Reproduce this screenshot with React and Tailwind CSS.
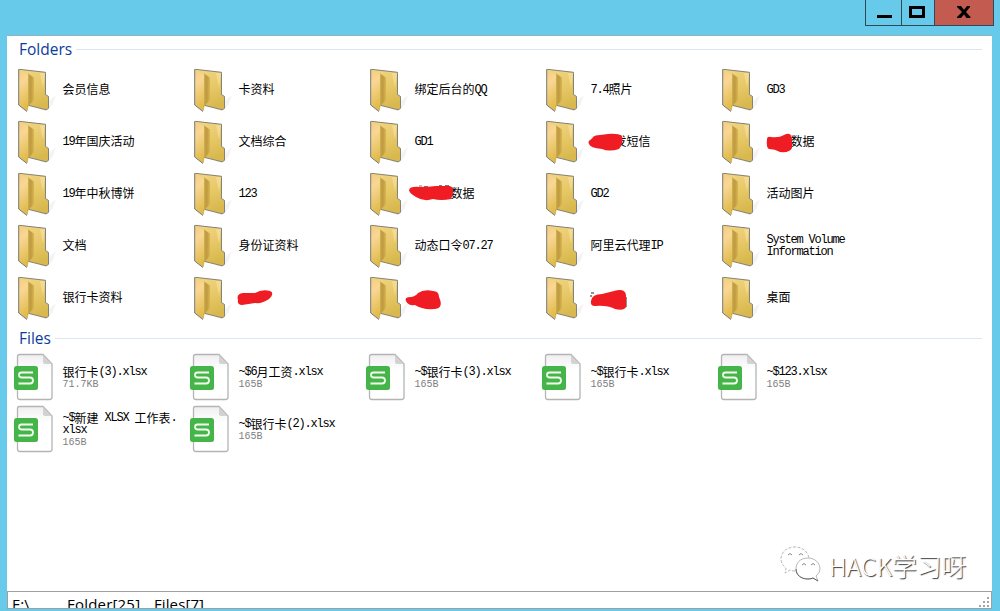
const FOLDERS = [
  { name: "会员信息" }, { name: "卡资料" }, { name: "绑定后台的QQ" }, { name: "7.4照片" }, { name: "GD3" },
  { name: "19年国庆活动" }, { name: "文档综合" }, { name: "GD1" }, { name: "发短信", mark: "a" }, { name: "数据", mark: "b" },
  { name: "19年中秋博饼" }, { name: "123" }, { name: "数据", mark: "c" }, { name: "GD2" }, { name: "活动图片" },
  { name: "文档" }, { name: "身份证资料" }, { name: "动态口令07.27" }, { name: "阿里云代理IP" }, { name: "System Volume\nInformation" },
  { name: "银行卡资料" }, { name: "", mark: "d" }, { name: "", mark: "e" }, { name: "", mark: "f" }, { name: "桌面" },
];

const FILES = [
  ["银行卡(3).xlsx", "71.7KB"],
  ["~$6月工资.xlsx", "165B"],
  ["~$银行卡(3).xlsx", "165B"],
  ["~$银行卡.xlsx", "165B"],
  ["~$123.xlsx", "165B"],
  ["~$新建 XLSX 工作表.\nxlsx", "165B"],
  ["~$银行卡(2).xlsx", "165B"],
];

// Hand-drawn strokes, in coordinates of a 176x52 cell.
const MARKS = {
  a: { pad: "pl-6", d: "M47 29C45 25 50 25 51 22Q53 20 58 20L66 19Q76 18 80 21Q82 28 77 34Q67 37 60 34Q48 33 47 29Z" },
  b: { pad: "pl-6", d: "M49 24Q49 21 53 22Q61 23 66 20Q73 16 74 24L74 33Q72 38 62 37Q57 34 51 34Q48 33 49 24Z" },
  c: { pad: "pl-9", d: "M43 23Q44 19 54 20Q62 20 70 19L84 19Q90 21 85 32Q75 34 67 32Q58 35 50 30Q43 26 43 23Z" },
  d: { pad: "pl-0", d: "M48 29Q46 23 53 22L65 22Q72 18 80 20Q85 22 79 28Q72 33 65 32L52 34Q47 34 48 29Z" },
  e: { pad: "pl-0", d: "M40 30Q38 26 45 26Q50 25 52 22Q58 18 67 20Q73 20 73 26Q78 37 69 38Q56 39 49 34Q42 35 40 30Z" },
  f: { pad: "pl-0", d: "M49 30Q50 23 60 23L72 20Q83 17 84 24L84 36Q82 40 73 38Q65 34 53 35Q48 35 49 30Z" },
};

function Label({ text }) {
  return text.split("\n").map((line) => (
    <div key={line} className="flex h-3 items-center whitespace-pre leading-3">
      {line.split(/([\x20-\x7e]+)/).filter(Boolean).map((part, i) =>
        /^[\x20-\x7e]+$/.test(part)
          ? <span key={i} className="pt-px font-['Liberation_Mono',monospace] text-[12px] leading-3 tracking-[-1.2px]">{part}</span>
          : <span key={i} className="leading-3">{part}</span>
      )}
    </div>
  ));
}

function FolderIcon() {
  return (
    <svg width="48" height="52" viewBox="0 0 48 52" className="shrink-0">
      <defs>
        <linearGradient id="back" x1="0" y1="0" x2="0.3" y2="1">
          <stop offset="0" stopColor="#f3d688" />
          <stop offset=".5" stopColor="#e8ca6b" />
          <stop offset="1" stopColor="#d9b94f" />
        </linearGradient>
        <linearGradient id="front" x1="0" y1="0" x2="0.2" y2="1">
          <stop offset="0" stopColor="#f3cb7c" />
          <stop offset=".35" stopColor="#f9d794" />
          <stop offset="1" stopColor="#dfbb4c" />
        </linearGradient>
        <linearGradient id="shade" x1="0" x2="1">
          <stop offset="0" stopColor="#c5a344" />
          <stop offset=".5" stopColor="#bf9d40" />
          <stop offset="1" stopColor="#d8b753" />
        </linearGradient>
      </defs>
      <path d="M30 46L40 36L46 31L43 40L37 47Z" fill="#f0f0f0" opacity=".7" />
      <path d="M9 5.3L35.5 8.3V30.5L38.5 32.5V44.300L36 45.8L17 41Z" fill="url(#back)" stroke="#858175" />
      <path d="M18 9.5L24 13.5V36L18.5 42Z" fill="url(#shade)" />
      <path d="M30 9L35 9L33 24Z" fill="#f8e3a8" opacity=".6" />
      <path d="M8.7 5.3L18.5 10.800V40L17 47.500L8.7 41Z" fill="url(#front)" />
      <path d="M17 47.500L8.7 41V5.3" fill="none" stroke="#77787a" />
      <path d="M18.5 11V40L17 47" fill="none" stroke="#c7a44d" strokeWidth=".7" />
    </svg>
  );
}

function SheetIcon() {
  return (
    <svg width="48" height="52" viewBox="0 0 48 52" className="shrink-0">
      <defs>
        <linearGradient id="paper" x1="0" y1="0" x2="0" y2="1">
          <stop offset="0" stopColor="#efefef" />
          <stop offset=".35" stopColor="#ffffff" />
        </linearGradient>
      </defs>
      <path d="M9.5 2.5H33L42 12V45Q42 47.5 39.5 47.5H10Q7.5 47.5 7.5 45V4.5Q7.5 2.5 9.5 2.5Z" fill="url(#paper)" stroke="#b4b4b4" strokeWidth="1.3" />
      <path d="M33 3V10Q33 12 35 12H41.5Z" fill="#d2d2d2" />
      <rect x="4" y="14" width="24" height="24" rx="2.5" fill="#46b549" />
      <path d="M23 20.5H11.5Q9 20.5 9 23Q9 25.5 12 25.5H20Q23 25.5 23 28.5Q23 31.5 20 31.5H8.5" fill="none" stroke="#f2fff0" strokeWidth="1.8" />
    </svg>
  );
}

function Heading({ children }) {
  return (
    <div className="flex h-7 items-center pr-2.5 pb-0.5 pl-3 font-['Open_Sans',sans-serif] text-[15.5px] text-[#0b3c9e]">
      <span>{children}</span>
      <span className="ml-1 h-px grow bg-[#dbe6f0]" />
    </div>
  );
}

function Folder({ name, mark }) {
  const m = mark && MARKS[mark];
  return (
    <div className="relative flex h-[52px] w-[176px] items-center">
      <FolderIcon />
      <div className={"ml-[4.5px] w-[112px] pb-0.5 " + (m ? m.pad : "pl-0")}><Label text={name} /></div>
      {m && (
        <svg className="absolute -top-px left-1" width="172" height="52" viewBox="0 0 172 52">
          {mark === "c" && <path d="M53 19h3M58 19.5h4M73 18.5h3M79 18.5h4" stroke="#777" />}
          {mark === "f" && <path d="M49 22h3M48 25h2M84 26v10" stroke="#222" />}
          <path d={m.d} fill="#ef1c24" />
        </svg>
      )}
    </div>
  );
}

function WindowButtons() {
  return (
    <div className="absolute top-0 right-[6px] flex h-[26px] w-[129px] border border-t-0 border-[#2c4a57]">
      <div className="w-9 border-r border-[#2c4a57]">
        <svg width="35" height="25"><path d="M11 16.5H26" stroke="#000" strokeWidth="3" /></svg>
      </div>
      <div className="w-[33px] border-r border-[#2c4a57]">
        <svg width="32" height="25"><rect x="8.5" y="7.5" width="13" height="9" fill="none" stroke="#000" strokeWidth="3" /></svg>
      </div>
      <div className="grow bg-[#c35b51]">
        <svg width="58" height="25"><path d="M22 6H26L29 9.7L32 6H35V7L31 12L35.5 17V18H31.5L29 14.5L26 18H22V17L27 12L22 7Z" fill="#000" /></svg>
      </div>
    </div>
  );
}

export default function App() {
  return (
    <div className="relative flex h-[611px] w-[1000px] flex-col overflow-hidden bg-[#67caea] pt-[35px] pr-2 pl-[7px] text-xs text-black font-['Noto_Sans_CJK_SC',sans-serif]">
      <WindowButtons />
      <main className="h-[556px] border-t border-[#8db3c0] bg-white">
        <Heading>Folders</Heading>
        <div className="ml-[3px] grid w-[880px] grid-cols-[repeat(5,176px)]">
          {FOLDERS.map((f, i) => <Folder key={i} {...f} />)}
        </div>
        <div className="pt-px">
          <Heading>Files</Heading>
        </div>
        <div className="-mt-px ml-[3px] grid w-[880px] grid-cols-[repeat(5,176px)]">
          {FILES.map(([name, size]) => (
            <div key={name} className="flex h-[52px] items-center">
              <SheetIcon />
              <div className="ml-[4.5px] w-[116px]">
                <Label text={name} />
                <div className="pt-px font-['Liberation_Mono',monospace] text-[10px] leading-3 text-[#808080]">{size}</div>
              </div>
            </div>
          ))}
        </div>
      </main>
      <footer className="flex h-[18px] items-start justify-between overflow-hidden border border-[#a0a0a0] bg-white font-['Open_Sans',sans-serif] text-[15px] leading-[22px]">
        <div className="flex pt-px pl-1">
          <span className="w-[55px]">E:\</span>
          <span className="w-[87px] tracking-[0.2px]">Folder[25]</span>
          <span className="tracking-[0.1px]">Files[7]</span>
        </div>
        <svg width="12" height="16" className="shrink-0"><path d="M8 5h2v2h-2zM4 9h2v2h-2zM8 9h2v2h-2zM0 13h2v2h-2zM4 13h2v2h-2zM8 13h2v2h-2z" fill="#a5a5a5" /></svg>
      </footer>
      <div className="absolute top-[545px] left-[780px] flex items-center gap-2 text-[24.8px] leading-10 font-light whitespace-nowrap text-white [text-shadow:1px_1px_1px_#333]">
        <svg width="41" height="38" viewBox="0 0 41 38" fill="#fff" stroke="#999" strokeWidth=".7">
          <path d="M15 25Q12 25 10 24L5 27L6 22Q1 18 1 13C1 6 7 1 15 1S28 6 29 12" strokeDasharray="3 1.5" />
          <path d="M28 12C20 12 16 17 16 23S21 33 28 33Q31 33 33 32L38 35L36 30Q40 27 40 23C40 17 35 12 28 12Z" />
          <path d="M16 23C16 29 21 33 28 33Q31 33 33 32L38 35" fill="none" stroke="#333" />
          <path d="M8 9q2-3 4 0M19 9q2-3 4 0M22 19q2-3 4 0M31 19q2-3 4 0" fill="none" stroke="#555" />
        </svg>
        <span>HACK学习呀</span>
      </div>
    </div>
  );
}
